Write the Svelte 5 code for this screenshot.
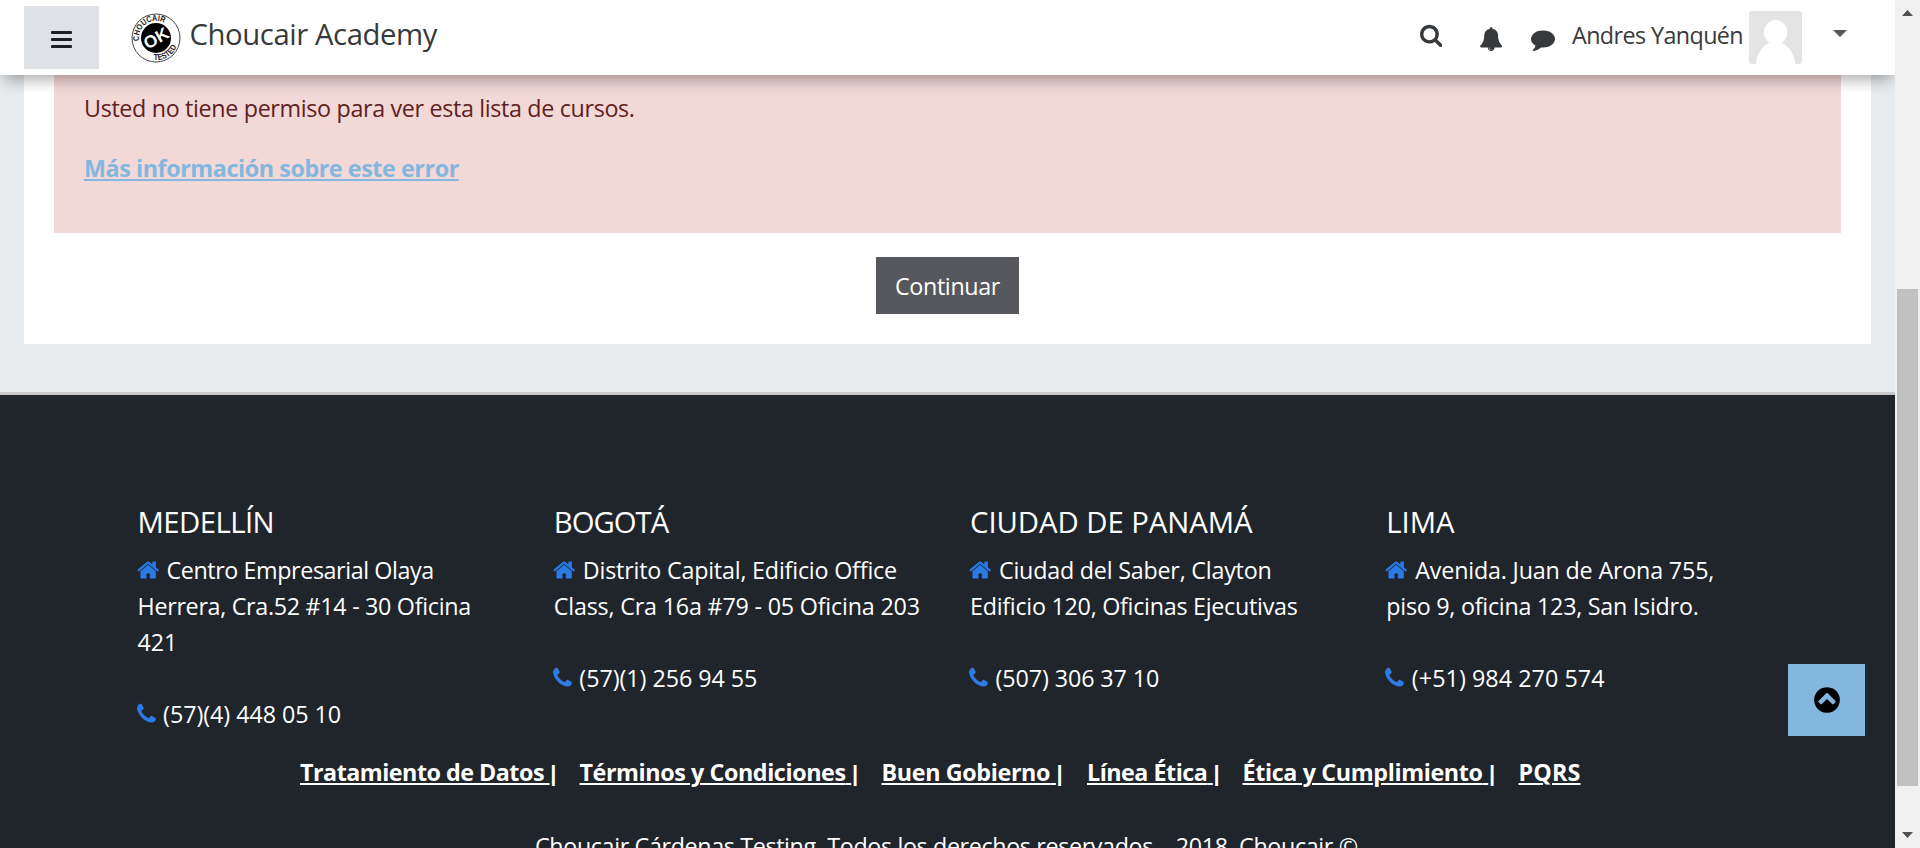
<script>
  const columns = [
    { city: 'MEDELLÍN', ls: -0.55, lines: [['Centro Empresarial Olaya', -0.41], ['Herrera, Cra.52 #14 - 30 Oficina', -0.3], ['421', -0.1]], phone: '(57)(4) 448 05 10', pls: -0.05 },
    { city: 'BOGOTÁ', ls: -1, lines: [['Distrito Capital, Edificio Office', -0.2], ['Class, Cra 16a #79 - 05 Oficina 203', -0.19]], phone: '(57)(1) 256 94 55', pls: -0.05 },
    { city: 'CIUDAD DE PANAMÁ', ls: -0.05, lines: [['Ciudad del Saber, Clayton', -0.22], ['Edificio 120, Oficinas Ejecutivas', -0.27]], phone: '(507) 306 37 10', pls: -0.1 },
    { city: 'LIMA', ls: 0, lines: [['Avenida. Juan de Arona 755,', -0.18], ['piso 9, oficina 123, San Isidro.', -0.25]], phone: '(+51) 984 270 574', pls: 0.06 }
  ];
  const links = [
    ['Tratamiento de Datos', -0.5],
    ['Términos y Condiciones', -0.41],
    ['Buen Gobierno', -0.36],
    ['Línea Ética', -0.5],
    ['Ética y Cumplimiento', -0.36],
    ['PQRS', 0.15]
  ];
  const icons = {
    home: 'M1472 992v480q0 26-19 45t-45 19h-384v-384h-256v384h-384q-26 0-45-19t-19-45v-480q0-1 .5-3t.5-3l575-474 575 474q1 2 1 6zm223-69l-62 74q-8 9-21 11h-3q-13 0-21-7l-692-577-692 577q-12 8-24 7-13-2-21-11l-62-74q-8-10-7-23.5t11-21.5l719-599q32-26 76-26t76 26l244 204v-195q0-14 9-23t23-9h192q14 0 23 9t9 23v408l219 182q10 8 11 21.5t-7 23.5z',
    phone: 'M1600 1240q0 27-10 70.5t-21 68.5q-21 50-122 106-94 51-186 51-27 0-53-3.5t-57.5-12.5-47-14.5-55.5-20.5-49-18q-98-35-175-83-127-79-264-216t-216-264q-48-77-83-175-3-9-18-49t-20.5-55.5-14.5-47-12.5-57.5-3.5-53q0-92 51-186 56-101 106-122 25-11 68.5-21t70.5-10q14 0 21 3 18 6 53 76 11 19 30 54t35 63.5 31 53.5q3 4 17.5 25t21.5 35.5 7 28.5q0 20-28.5 50t-62 55-62 53-28.5 46q0 9 5 22.5t8.5 20.5 14 24 11.5 19q76 137 174 235t235 174q2 1 19 11.5t24 14 20.5 8.5 22.5 5q18 0 46-28.5t53-62 55-62 50-28.5q14 0 28.5 7t35.5 21.5 25 17.5q25 15 53.5 31t63.5 35 54 30q70 35 76 53 3 7 3 21z',
    search: 'M1216 832q0-185-131.5-316.5t-316.5-131.5-316.5 131.5-131.5 316.5 131.5 316.5 316.5 131.5 316.5-131.5 131.5-316.5zm512 832q0 52-38 90t-90 38q-54 0-90-38l-343-342q-179 124-399 124-143 0-273.5-55.5t-225-150-150-225-55.5-273.5 55.5-273.5 150-225 225-150 273.5-55.5 273.5 55.5 225 150 150 225 55.5 273.5q0 220-124 399l343 343q37 37 37 90z',
    bell: 'M912 1696q0-16-16-16-59 0-101.5-42.5t-42.5-101.5q0-16-16-16t-16 16q0 73 51.5 124.5t124.5 51.5q16 0 16-16zm816-288q0 52-38 90t-90 38h-448q0 106-75 181t-181 75-181-75-75-181h-448q-52 0-90-38t-38-90q50-42 91-88t85-119.5 74.5-158.5 50-206 19.5-260q0-152 117-282.5t307-158.5q-8-19-8-39 0-40 28-68t68-28 68 28 28 68q0 20-8 39 190 28 307 158.5t117 282.5q0 139 19.5 260t50 206 74.5 158.5 85 119.5 91 88z',
    comment: 'M1792 896q0 174-120 321.5t-326 233-450 85.5q-70 0-145-8-198 175-460 242-49 14-114 22-17 2-30.5-9t-17.5-29v-1q-3-4-.5-12t2-10 4.5-9.5l6-9 7-8.5 8-9q7-8 31-34.5t34.5-38 31-39.5 32.5-51 27-59 26-76q-157-89-247.5-220t-90.5-281q0-130 71-248.5t191-204.5 286-136.5 348-50.5q244 0 450 85.5t326 233 120 321.5z',
    up: 'M1293 1139l102-102q19-19 19-45t-19-45l-454-454q-19-19-45-19t-45 19l-454 454q-19 19-19 45t19 45l102 102q19 19 45 19t45-19l307-307 307 307q19 19 45 19t45-19zm371-243q0 209-103 385.5t-279.5 279.5-385.5 103-385.5-103-279.5-279.5-103-385.5 103-385.5 279.5-279.5 385.5-103 385.5 103 279.5 279.5 103 385.5z'
  };
</script>

<div class="window">
  <div class="page">
    <header>
      <button class="toggle" aria-label="Menú"><i></i><i></i><i></i></button>
      <a class="brand" href="#inicio">
        <svg class="logo" viewBox="0 0 50 50" width="50" height="50">
          <defs>
            <path id="arc-top" d="M8.2 27.8 A17 17 0 0 1 41.8 22" />
            <path id="arc-bottom" d="M22 47 A22.2 22.2 0 0 0 47.2 24" />
          </defs>
          <circle cx="25" cy="25" r="24" fill="#fff" stroke="#444" stroke-width="1" />
          <circle cx="25" cy="25" r="15" fill="#000" />
          <text class="ring"><textPath href="#arc-top" textLength="38" lengthAdjust="spacingAndGlyphs">CHOUCAIR</textPath></text>
          <text class="ring"><textPath href="#arc-bottom" startOffset="1" textLength="28" lengthAdjust="spacingAndGlyphs">TESTED</textPath></text>
          <text class="ok" transform="translate(25 25) rotate(-30)" x="0" y="6" text-anchor="middle" textLength="26" lengthAdjust="spacingAndGlyphs">OK</text>
        </svg>
        <span>Choucair Academy</span>
      </a>
      <nav>
        <svg class="search" viewBox="64 0 1664 1792" width="22.3" height="24"><path d={icons.search} /></svg>
        <svg class="bell" viewBox="64 0 1664 1792" width="22.3" height="24"><path d={icons.bell} /></svg>
        <svg class="comment" viewBox="0 0 1792 1792" width="24" height="24"><path d={icons.comment} /></svg>
        <span class="user">Andres Yanquén</span>
        <svg class="avatar" viewBox="0 0 53 53" width="53" height="53">
          <rect width="53" height="53" fill="#e4e4e4" />
          <ellipse cx="26.6" cy="21.3" rx="11.7" ry="12.2" fill="#fff" />
          <path d="M6.8 53C8 42 13.500 34.500 21 31.500H32C39.500 34.500 45 42 46.300 53Z" fill="#fff" />
        </svg>
        <svg class="caret" viewBox="0 0 14 7" width="14" height="7"><path d="M0 0H14L7 7Z" /></svg>
      </nav>
    </header>

    <main>
      <section class="card">
        <div class="alert">
          <p>Usted no tiene permiso para ver esta lista de cursos.</p>
          <p><a href="#error">Más información sobre este error</a></p>
        </div>
        <button class="continue">Continuar</button>
      </section>
    </main>

    <footer>
      <div class="columns">
        {#each columns as col}
          <section>
            <h3 style:letter-spacing="{col.ls}px">{col.city}</h3>
            {#each col.lines as [text, ls], i}
              <p>{#if i === 0}<svg class="home" viewBox="64 0 1664 1792" width="22.3" height="24"><path d={icons.home} /></svg>{/if}<span style:letter-spacing="{ls}px">{text}</span></p>
            {/each}
            <p class="phone"><svg viewBox="192 0 1408 1792" width="18.9" height="24"><path d={icons.phone} /></svg><span style:letter-spacing="{col.pls}px">{col.phone}</span></p>
          </section>
        {/each}
      </div>
      <div class="links">
        {#each links as [text, ls], i}
          <span><a href="#pie" style:letter-spacing="{ls}px">{text}{#if i < 5}&nbsp;{/if}</a>{#if i < 5}<b>|</b>{/if}</span>
        {/each}
      </div>
      <p class="copy">Choucair Cárdenas Testing. Todos los derechos reservados. &nbsp; 2018. Choucair ©</p>
    </footer>

    <button class="top" aria-label="Subir"><svg viewBox="0 0 1792 1792" width="30" height="30"><path d={icons.up} /></svg></button>
  </div>

  <aside class="scroll">
    <svg viewBox="0 0 11 6" width="11" height="6"><path d="M0 6L5.500 0L11 6Z" /></svg>
    <div class="thumb"></div>
    <svg viewBox="0 0 11 6" width="11" height="6"><path d="M0 0L5.500 6L11 0Z" /></svg>
  </aside>
</div>

<style>
  :global(body) { margin: 0; overflow: hidden; }
  * { box-sizing: border-box; }
  .window { display: flex; width: 1920px; height: 848px; overflow: hidden; font: 23.3px/36px "Open Sans", "Noto Sans", sans-serif; }
  .page { position: relative; width: 1895px; height: 848px; overflow: hidden; background: #e7ebee; display: flex; flex-direction: column; }
  p, h3 { margin: 0; white-space: nowrap; }
  button { border: 0; padding: 0; font: inherit; }

  header { position: relative; z-index: 1; flex: none; display: flex; height: 75px; padding-left: 24px; background: #fff; box-shadow: 0 9px 14px -4px rgba(0, 0, 0, .32); }
  .toggle { display: flex; flex-direction: column; align-items: center; gap: 4px; width: 75px; height: 63px; margin-top: 6px; padding-top: 25px; background: #dee2e6; }
  .toggle i { width: 21px; height: 3px; background: #1d2125; border-radius: 1px; }
  .brand { display: flex; margin-left: 31.500px; color: #373a3c; text-decoration: none; }
  .logo { margin-top: 12.500px; }
  .brand span { margin: 16px 0 0 9px; font-size: 29.3px; letter-spacing: -.43px; white-space: nowrap; }
  .ring { font: 700 8.4px "Liberation Sans", sans-serif; fill: #222; }
  .ok { font: 700 17px "Liberation Sans", sans-serif; fill: #fff; }
  nav { display: flex; align-items: flex-start; margin-left: auto; margin-right: 48px; fill: #373a3c; color: #373a3c; }
  nav svg { flex: none; }
  .search { margin: 23px 37.400px 0 0; }
  .bell { margin: 27px 29px 0 0; }
  .comment { margin: 27px 17px 0 0; }
  .user { width: 177px; margin-top: 17px; letter-spacing: -.58px; white-space: nowrap; }
  .avatar { margin-top: 11px; border-radius: 3px; }
  .caret { margin: 30px 0 0 31px; fill: #55555c; }

  main { flex: none; height: 317px; padding: 0 24px; }
  .card { display: flex; flex-direction: column; align-items: center; height: 269px; padding: 0 30px; background: #fff; }
  .alert { align-self: stretch; display: flex; flex-direction: column; gap: 24px; height: 158px; padding: 15px 30px; background: #f3d8d8; color: #601f21; letter-spacing: -.34px; }
  .alert a { color: #82b7de; font-weight: 700; letter-spacing: -.42px; text-decoration: underline; text-decoration-thickness: 2px; text-underline-offset: 2px; }
  .continue { width: 143px; height: 57px; margin-top: 24px; background: #57585d; color: #fff; letter-spacing: -.35px; }

  footer { flex: 1; border-top: 3px solid #c8c8c8; background: #20242b; color: #fff; }
  .columns { display: grid; grid-template-columns: repeat(4, 416.25px); width: 1665px; height: 359px; margin: 0 auto; padding-top: 109px; }
  .columns section { padding-left: 22.500px; }
  h3 { margin-bottom: 12px; font-size: 29.3px; line-height: 36px; font-weight: 400; }
  .columns p { height: 36px; }
  .columns .phone { margin-top: 36px; }
  .columns svg { fill: #2a7be4; vertical-align: -3.4px; margin: 0 7.500px 0 -.8px; }
  .links { display: grid; grid-template-columns: 279.5px 302px 205.5px 155.5px 276px 62px; margin-left: 300px; height: 74px; font-weight: 700; white-space: nowrap; }
  .links a { color: #fff; text-decoration: underline; text-decoration-thickness: 2px; text-underline-offset: 2px; }
  .links b { margin-left: -1.500px; font-size: 21px; }
  .copy { margin-left: 535px; letter-spacing: -.36px; }

  .top { position: absolute; right: 30px; bottom: 112px; display: grid; place-items: center; width: 77px; height: 72px; background: #83b7de; }
  .scroll { display: flex; flex-direction: column; align-items: center; width: 25px; padding: 10px 0; background: #f0f0f0; fill: #505050; justify-content: space-between; }
  .scroll svg { display: block; flex: none; }
  .thumb { width: 21px; height: 497px; margin-top: 227px; background: #c1c1c1; }
</style>
